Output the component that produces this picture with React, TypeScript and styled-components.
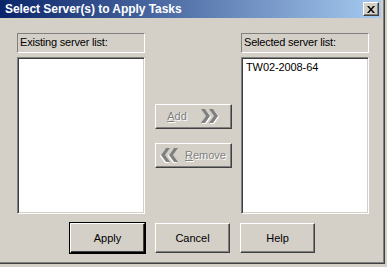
import React from "react";
import styled, { createGlobalStyle, css } from "styled-components";

const Global = createGlobalStyle`
  html, body { margin: 0; padding: 0; background: #d4d0c8; }
  body { font-family: Tahoma, "Liberation Sans", Arial, sans-serif; font-size: 11px; color: #000; }
`;

const Window = styled.div`
  width: 385px;
  height: 264px;
  box-sizing: border-box;
  background: #d4d0c8;
  border-right: 1px solid #404040;
  border-bottom: 1px solid #404040;
  box-shadow: inset -1px -1px 0 #808080;
  padding: 0 3px 3px 0;
  display: flex;
  flex-direction: column;
`;

const TitleBar = styled.div`
  height: 18px;
  flex: none;
  background: linear-gradient(to right, #0a246a, #a6caf0);
  display: flex;
  align-items: center;
  justify-content: space-between;
  padding: 0 2px 0 5px;
`;

const TitleText = styled.span`
  color: #fff;
  font-family: "Liberation Sans", Arial, sans-serif;
  font-weight: bold;
  font-size: 12px;
  letter-spacing: -0.05px;
`;

const CloseButton = styled.div`
  width: 16px;
  height: 14px;
  box-sizing: border-box;
  background: #d4d0c8;
  border-top: 1px solid #fff;
  border-left: 1px solid #fff;
  border-right: 1px solid #404040;
  border-bottom: 1px solid #404040;
  box-shadow: inset -1px -1px 0 #808080;
  display: flex;
  align-items: center;
  justify-content: center;
`;

const Body = styled.div`
  display: flex;
  padding: 15px 12px 0 17px;
`;

const Column = styled.div`
  width: 128px;
  display: flex;
  flex-direction: column;
  gap: 4px;
`;

const Label = styled.div`
  height: 20px;
  box-sizing: border-box;
  border-top: 1px solid #808080;
  border-left: 1px solid #808080;
  border-right: 1px solid #fff;
  border-bottom: 1px solid #fff;
  padding: 2px 0 0 2px;
  font-family: "Liberation Sans", Arial, sans-serif;
  font-size: 11px;
  line-height: 13px;
  letter-spacing: -0.2px;
`;

const ListBox = styled.div`
  height: 157px;
  box-sizing: border-box;
  background: #fff;
  border-top: 1px solid #808080;
  border-left: 1px solid #808080;
  border-right: 1px solid #fff;
  border-bottom: 1px solid #fff;
  box-shadow: inset 1px 1px 0 #404040, inset -1px -1px 0 #d4d0c8;
  padding: 3px 4px;
`;

const ListItem = styled.div`
  font-family: "Liberation Sans", Arial, sans-serif;
  font-size: 11px;
  line-height: 13px;
  letter-spacing: -0.1px;
`;

const Middle = styled.div`
  width: 96px;
  display: flex;
  flex-direction: column;
  align-items: center;
  justify-content: center;
  gap: 14px;
  padding-top: 24px;
`;

const raised = css`
  box-sizing: border-box;
  background: #d4d0c8;
  border-top: 1px solid #fff;
  border-left: 1px solid #fff;
  border-right: 1px solid #404040;
  border-bottom: 1px solid #404040;
  box-shadow: inset -1px -1px 0 #808080;
`;

const MoveButton = styled.div<{ $gap: number }>`
  ${raised};
  width: 77px;
  height: 25px;
  display: flex;
  align-items: center;
  justify-content: center;
  gap: ${(p) => p.$gap}px;
  font-family: "Liberation Sans", Arial, sans-serif;
  font-size: 11px;
  color: #808080;
  text-shadow: 1px 1px 0 #fff;
`;

const Footer = styled.div`
  display: flex;
  gap: 10px;
  padding: 9px 0 0 70px;
`;

const PushButton = styled.div<{ $default?: boolean }>`
  ${raised};
  width: 75px;
  height: 30px;
  display: flex;
  align-items: center;
  justify-content: center;
  font-family: "Liberation Sans", Arial, sans-serif;
  font-size: 11px;
  ${(p) =>
    p.$default &&
    css`
      outline: 1px solid #000;
      border-right-color: #000;
      border-bottom-color: #000;
      box-shadow: inset -1px -1px 0 #404040;
    `}
`;

const Chevrons = ({ dir }: { dir: "left" | "right" }) => (
  <svg width="18" height="15" viewBox="0 0 18 15" style={{ transform: dir === "left" ? "scaleX(-1)" : undefined }}>
    <g fill="#fff" transform="translate(1,1)">
      <polygon points="0,0 4,0 9,7 4,14 0,14 5,7" />
      <polygon points="8,0 12,0 17,7 12,14 8,14 13,7" />
    </g>
    <g fill="#808080">
      <polygon points="0,0 4,0 9,7 4,14 0,14 5,7" />
      <polygon points="8,0 12,0 17,7 12,14 8,14 13,7" />
    </g>
  </svg>
);

export default function App() {
  return (
    <>
      <Global />
      <Window>
        <TitleBar>
          <TitleText>Select Server(s) to Apply Tasks</TitleText>
          <CloseButton>
            <svg width="8" height="7" viewBox="0 0 8 7">
              <path d="M0 0h2l2 2.5L6 0h2L5 3.5 8 7H6L4 4.5 2 7H0l3-3.5z" fill="#000" />
            </svg>
          </CloseButton>
        </TitleBar>
        <Body>
          <Column>
            <Label>Existing server list:</Label>
            <ListBox />
          </Column>
          <Middle>
            <MoveButton $gap={14}>
              <span>
                <u>A</u>dd
              </span>
              <Chevrons dir="right" />
            </MoveButton>
            <MoveButton $gap={7}>
              <Chevrons dir="left" />
              <span>
                <u>R</u>emove
              </span>
            </MoveButton>
          </Middle>
          <Column>
            <Label>Selected server list:</Label>
            <ListBox>
              <ListItem>TW02-2008-64</ListItem>
            </ListBox>
          </Column>
        </Body>
        <Footer>
          <PushButton $default>Apply</PushButton>
          <PushButton>Cancel</PushButton>
          <PushButton>Help</PushButton>
        </Footer>
      </Window>
    </>
  );
}
